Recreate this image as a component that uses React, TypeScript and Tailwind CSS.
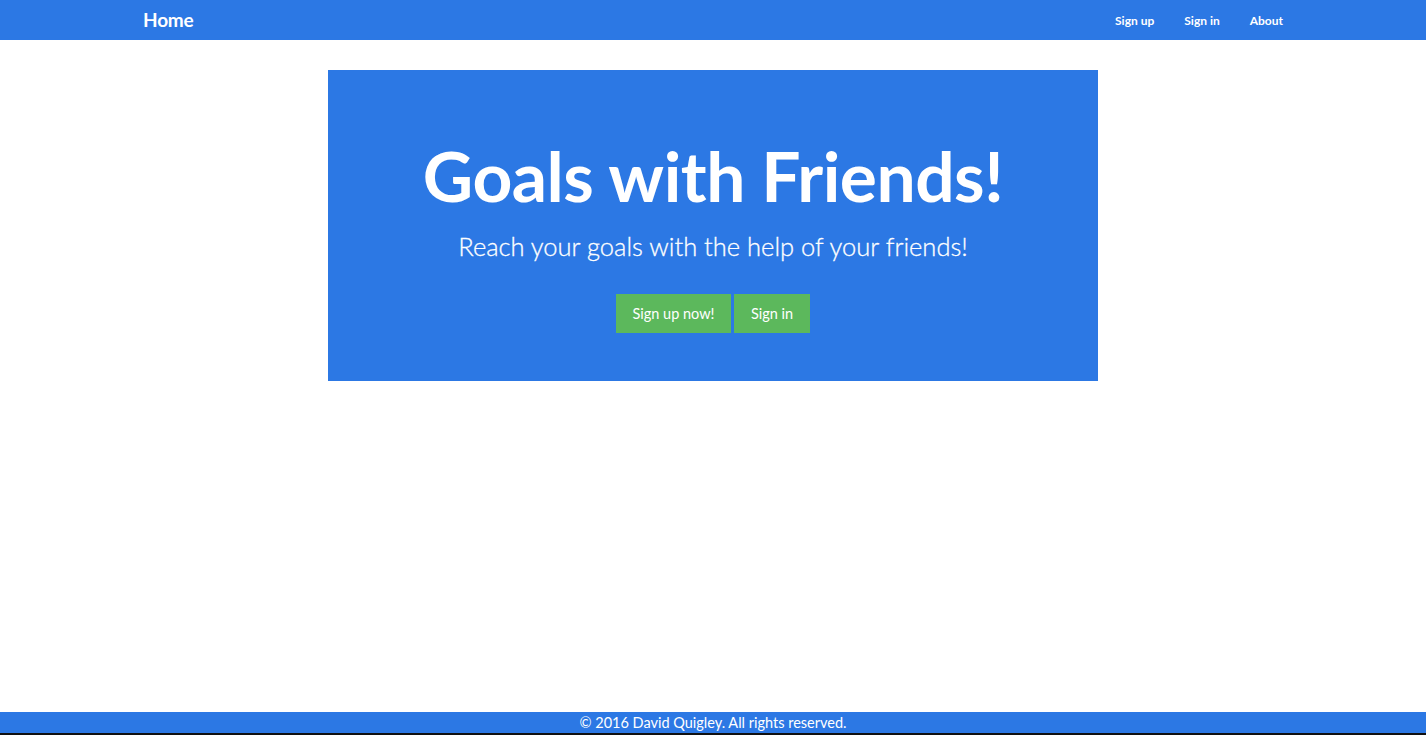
export default function App() {
  return (
    <div className="h-screen flex flex-col bg-white font-['Lato','Open_Sans',sans-serif] text-white">
      {/* Top navbar */}
      <nav className="h-10 shrink-0 bg-[#2c78e4]">
        <div className="w-[1140px] mx-auto h-full flex items-center justify-between">
          <a className="text-[19px] font-bold tracking-[-0.2px]">Home</a>
          <ul className="flex items-center gap-[30px] text-[12px] font-bold pt-px">
            <li>Sign up</li>
            <li>Sign in</li>
            <li>About</li>
          </ul>
        </div>
      </nav>

      <main className="flex-1 pt-[30px]">
        <div className="w-[770px] h-[311px] mx-auto bg-[#2c78e4] flex flex-col items-center pt-[63px]">
          <h1 className="text-[69.5px] leading-[84px] font-bold tracking-[-0.5px]">Goals with Friends!</h1>
          <p className="mt-[14px] text-[25.5px] font-light leading-[30px] [-webkit-text-stroke:0.3px_white]">
            Reach your goals with the help of your friends!
          </p>
          <div className="mt-[33px] flex gap-[3px]">
            <button className="h-[39px] w-[115px] bg-[#5cb85c] text-[14.5px]">Sign up now!</button>
            <button className="h-[39px] w-[76px] bg-[#5cb85c] text-[14.5px]">Sign in</button>
          </div>
        </div>
      </main>

      <footer className="h-[23px] shrink-0 bg-[#2c78e4] border-b-2 border-[#111] flex items-center justify-center text-[14.5px] leading-none pt-px">
        © 2016 David Quigley. All rights reserved.
      </footer>
    </div>
  );
}
